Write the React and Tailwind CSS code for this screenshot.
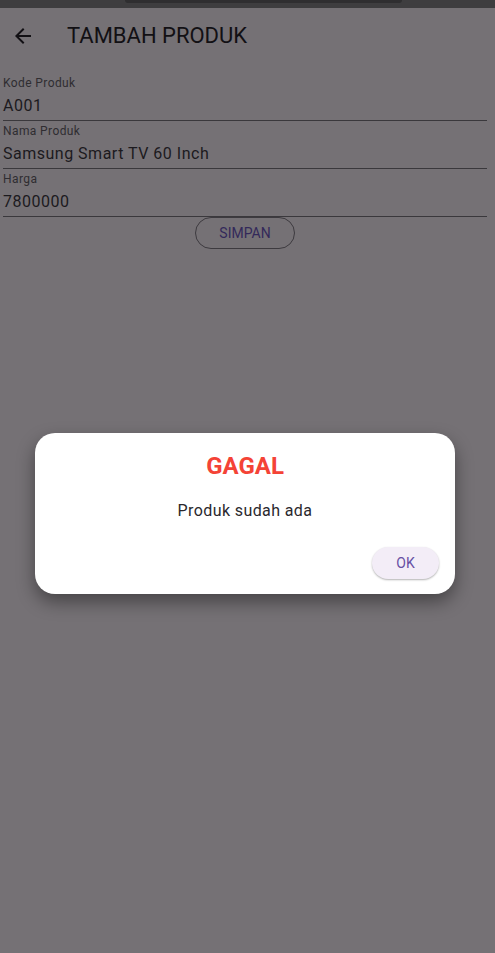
import React from 'react';

const fields = [
  { label: 'Kode Produk', value: 'A001' },
  { label: 'Nama Produk', value: 'Samsung Smart TV 60 Inch' },
  { label: 'Harga', value: '7800000' },
];

const ArrowBack = () => (
  <svg width="24" height="24" viewBox="0 0 24 24" fill="#121014">
    <path d="M20 11H7.83l5.59-5.59L12 4l-8 8 8 8 1.41-1.41L7.83 13H20v-2z" />
  </svg>
);

export default function App() {
  return (
    <div className="relative w-[495px] h-[953px] overflow-hidden bg-[#757175] font-['Roboto',sans-serif]">
      {/* status strip */}
      <div className="h-[8px] bg-[#3e3d3f]">
        <div className="ml-[125px] w-[277px] h-[3px] rounded-b-md bg-[#2f2e30]" />
      </div>

      {/* app bar */}
      <div className="h-[56px] flex items-center pl-[11px]">
        <ArrowBack />
        <h1 className="ml-[32px] text-[22px] leading-[28px] text-[#121014]">TAMBAH PRODUK</h1>
      </div>

      {/* form */}
      <div className="pt-[9px] ml-[3px] mr-[8px]">
        {fields.map((f) => (
          <div key={f.label} className="pt-[2px] pb-[2px] border-b border-[#3a383c]">
            <div className="text-[12px] leading-[16px] tracking-[0.4px] text-[#2f2d31]">{f.label}</div>
            <div className="mt-[3px] text-[16px] leading-[24px] tracking-[0.5px] text-[#1c1a1e]">{f.value}</div>
          </div>
        ))}
        <div className="flex justify-center">
          <button className="w-[100px] h-[32px] rounded-full border border-[#3d3a3f] text-[14px] text-[#33295a]">
            SIMPAN
          </button>
        </div>
      </div>

      {/* dialog */}
      <div className="absolute top-[433px] left-[35px] w-[420px] h-[161px] bg-white rounded-[20px] shadow-[0_8px_18px_rgba(0,0,0,0.4)] flex flex-col">
        <div className="mt-[17px] text-center text-[24px] leading-[32px] font-bold text-[#f44336]">GAGAL</div>
        <div className="mt-[17px] text-center text-[16px] leading-[24px] tracking-[0.4px] text-[#2a282d]">Produk sudah ada</div>
        <div className="mt-[24px] flex justify-end pr-[16px]">
          <button className="w-[67px] h-[32px] rounded-full bg-[#f3edf7] shadow-[0_1px_2px_rgba(0,0,0,0.3)] text-[14px] text-[#6750a4]">
            OK
          </button>
        </div>
      </div>
    </div>
  );
}
